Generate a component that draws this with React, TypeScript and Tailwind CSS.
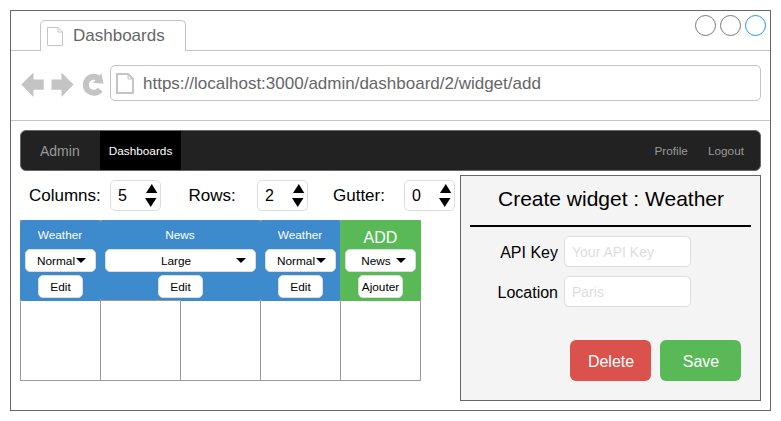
import React from 'react';

function PageIcon({ w, h, stroke, fold }: { w: number; h: number; stroke: number; fold: number }) {
  const o = stroke / 2;
  return (
    <svg width={w} height={h} className="block shrink-0" fill="none" stroke="#c4c4c4" strokeWidth={stroke}>
      <path d={`M${o} ${o}H${w - fold}L${w - o} ${fold}V${h - o}H${o}Z`} />
      <path d={`M${w - fold} ${o}V${fold}H${w - o}`} strokeWidth={1} />
    </svg>
  );
}

function Spinner({ label, value, labelClass }: { label: string; value: string; labelClass: string }) {
  return (
    <div className="flex items-center">
      <span className={`block text-[17px] leading-[31px] whitespace-nowrap ${labelClass}`}>{label}</span>
      <div className="flex h-[31px] w-[51px] items-center justify-between rounded-[5px] border border-[#ddd] bg-white pl-[7px] pr-[2px] text-[16px]">
        <span className="leading-[29px]">{value}</span>
        <svg width="13" height="23" className="block" fill="#000">
          <path d="M1 9L6.8 0L12.3 9Z" />
          <path d="M0 14H11.5L5.7 23Z" />
        </svg>
      </div>
    </div>
  );
}

function Widget({ title, size, action, color, width, selectWidth, large }: {
  title: string; size: string; action: string; color: string; width: string; selectWidth: string; large?: boolean;
}) {
  return (
    <div className={`h-[81px] shrink-0 border border-[#999] bg-white ${width}`}>
      <div className={`-m-px flex h-[81px] flex-col items-center rounded-[4px] ${color}`}>
        <div className={`h-[29px] whitespace-nowrap text-white ${large ? 'pt-[2px] text-[16px] leading-[31px]' : 'pr-px text-[11.8px] leading-[31px]'}`}>{title}</div>
        <div className={`flex h-[23px] items-center rounded-[5px] border border-[#ddd] bg-white pr-[9px] ${selectWidth}`}>
          <span className="-mr-[10px] block flex-1 pt-[2px] text-center text-[11.8px] leading-[21px]">{size}</span>
          <svg width="10" height="5" className="block shrink-0"><path d="M0 0H10L5 5Z" fill="#000" /></svg>
        </div>
        <div className="mt-[3px] flex h-[23px] w-[45px] items-center justify-center rounded-[5px] border border-[#ddd] bg-white pt-[2px] text-[11.8px] leading-[21px]">{action}</div>
      </div>
    </div>
  );
}

function Field({ label, placeholder }: { label: string; placeholder: string }) {
  return (
    <div className="flex h-[31px] items-center">
      <span className="w-[97px] pt-[2px] text-right text-[16px] leading-[29px]">{label}</span>
      <div className="ml-[6px] h-[31px] w-[127px] rounded-[5px] border border-[#ddd] bg-white pl-[7px] text-[14px] leading-[30px] text-[#ddd]">{placeholder}</div>
    </div>
  );
}

export default function App() {
  return (
    <div className="h-[421px] w-[781px] overflow-hidden bg-white p-[10px] font-['Liberation_Sans',Arial,sans-serif] text-black">
      <div className="h-[401px] w-[761px] border border-[#666] bg-white">
        <div className="flex h-[40px]">
          <div className="w-[29px] border-b border-[#c4c4c4]" />
          <div className="mt-[9px] flex h-[31px] w-[146px] rounded-t-[5px] border border-b-0 border-[#c4c4c4] pl-[6px] pt-[6px]">
            <PageIcon w={16} h={19} stroke={1} fold={5} />
            <span className="ml-[10px] -mt-[1px] text-[17px] leading-[20px] text-[#666]">Dashboards</span>
          </div>
          <div className="flex flex-1 justify-end gap-[4px] border-b border-[#c4c4c4] pr-[4px] pt-[4px]">
            <div className="size-[21px] rounded-full border border-[#777]" />
            <div className="size-[21px] rounded-full border border-[#777]" />
            <div className="size-[21px] rounded-full border border-[#1a94ff]" />
          </div>
        </div>

        <div className="flex h-[70px] border-b border-[#c4c4c4] pt-[14px]">
          <svg width="99" height="36" className="block shrink-0" fill="#c4c4c4">
            <path d="M10.2 19.5L22.5 7.5V14.5H32.7V24.7H22.5V32Z" />
            <path d="M62.5 19.5L50.5 7.5V14.5H40.5V24.7H50.5V32Z" />
            <path d="M88.3 14A8 8 0 1 0 89.2 24.6" fill="none" stroke="#c4c4c4" strokeWidth="6" />
            <path d="M90.5 8.3L92.5 18.8L82 17.8Z" />
          </svg>
          <div className="flex h-[36px] w-[651px] rounded-[5px] border border-[#c4c4c4] pl-[5px] pt-[7px]">
            <PageIcon w={18} h={21} stroke={2} fold={6} />
            <span className="ml-[9px] pt-px text-[17px] leading-[20px] text-[#666]">https://localhost:3000/admin/dashboard/2/widget/add</span>
          </div>
        </div>

        <div className="px-[9px] pt-[9px]">
          <nav className="flex h-[41px] w-[741px] items-stretch overflow-hidden rounded-[6px] border border-[#666] bg-[#222] leading-[40px] text-[#999]">
            <span className="w-[79px] pl-[19px] text-[14px]">Admin</span>
            <span className="w-[81px] bg-black text-center text-[11.8px] text-white">Dashboards</span>
            <span className="ml-auto text-[11.8px]">Profile</span>
            <span className="ml-[20px] mr-[16px] text-[11.8px]">Logout</span>
          </nav>

          <div className="flex">
            <div className="w-[440px] pt-[9px]">
              <div className="flex">
                <Spinner label="Columns:" value="5" labelClass="w-[90px] pl-[9px]" />
                <Spinner label="Rows:" value="2" labelClass="w-[96px] pl-[27.5px]" />
                <Spinner label="Gutter:" value="0" labelClass="w-[96px] pl-[25px]" />
              </div>
              <div className="relative z-10 mt-[9px] flex -space-x-px">
                <Widget title="Weather" size="Normal" action="Edit" color="bg-[#3d8bcd]" width="w-[81px]" selectWidth="w-[71px]" />
                <Widget title="News" size="Large" action="Edit" color="bg-[#3d8bcd]" width="w-[161px]" selectWidth="w-[151px]" />
                <Widget title="Weather" size="Normal" action="Edit" color="bg-[#3d8bcd]" width="w-[81px]" selectWidth="w-[71px]" />
                <Widget title="ADD" size="News" action="Ajouter" color="bg-[#5ab957]" width="w-[81px]" selectWidth="w-[71px]" large />
              </div>
              <div className="-mt-px flex -space-x-px">
                <div className="h-[81px] w-[81px] border border-[#999]" />
                <div className="relative z-20 h-[81px] w-[81px] border border-[#999]" />
                <div className="h-[81px] w-[81px] border border-[#999]" />
                <div className="h-[81px] w-[81px] border border-[#999]" />
                <div className="h-[81px] w-[81px] border border-[#999]" />
              </div>
            </div>

            <section className="mt-[4px] h-[226px] w-[301px] shrink-0 border border-[#666] bg-[#f4f4f4]">
              <h1 className="h-[49px] pl-px text-center text-[21px] leading-[45px]">Create widget : Weather</h1>
              <div className="mx-[9px] h-[2px] bg-black" />
              <div className="mt-[9px] flex flex-col gap-[9px]">
                <Field label="API Key" placeholder="Your API Key" />
                <Field label="Location" placeholder="Paris" />
              </div>
              <div className="mt-[33px] flex justify-end gap-[9px] pr-[19px] text-center text-[16px] leading-[43px] text-white">
                <div className="h-[41px] w-[81px] rounded-[6px] bg-[#db524d] pl-px">Delete</div>
                <div className="h-[41px] w-[81px] rounded-[6px] bg-[#5ab957] pl-px">Save</div>
              </div>
            </section>
          </div>
        </div>
      </div>
    </div>
  );
}
